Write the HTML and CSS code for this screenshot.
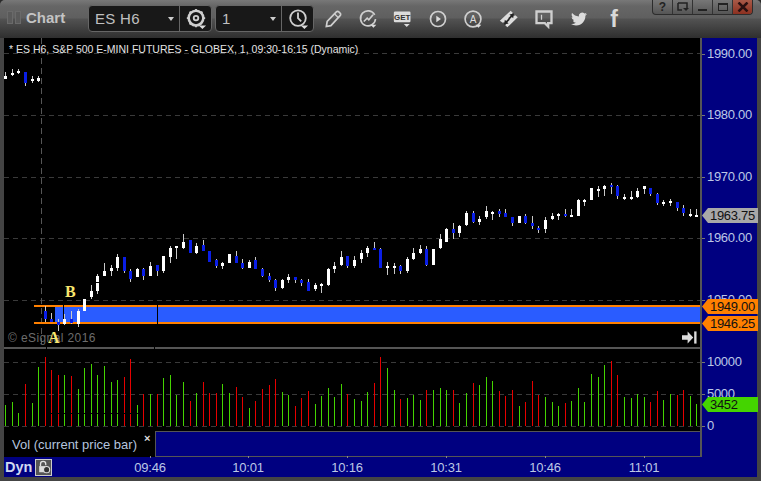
FILE: index.html
```html
<!DOCTYPE html>
<html lang="en">
<head>
<meta charset="utf-8">
<title>Chart</title>
<link rel="stylesheet" href="styles.css">
</head>
<body>
<div class="window">
  <header class="titlebar">
    <div class="handle"><span></span><span></span></div>
    <div class="app-name">Chart</div>
    <div class="combo combo-symbol">
      <span class="combo-value">ES H6</span><span class="caret"></span>
      <button class="combo-btn">
        <svg class="ico ico-lg" viewBox="0 0 24 24"><circle cx="12" cy="11" r="8" class="ln3"/><circle cx="12" cy="11" r="2.500" class="ln2"/><path d="M12 1v3M12 18v3M2 11h3M19 11h3M5 4l2 2M19 4l-2 2M5 18l2-2" class="ln2"/><path d="M15 19h8l-4 4z" class="fl"/></svg>
      </button>
    </div>
    <div class="combo combo-interval">
      <span class="combo-value">1</span><span class="caret"></span>
      <button class="combo-btn">
        <svg class="ico ico-lg" viewBox="0 0 24 24"><circle cx="12" cy="11" r="8.500" class="ln2"/><path d="M12 5v6l3.500 3.500" class="ln2"/><path d="M15 19h8l-4 4z" class="fl"/></svg>
      </button>
    </div>
    <div class="tools">
      <span class="tool"><svg class="ico" viewBox="0 0 24 24"><path d="M4 21l1-6L16 3.500a2 2 0 0 1 3 0l1.500 1.500a2 2 0 0 1 0 3L9.500 20z" class="ln2"/><path d="M14 6l4.500 4.500" class="ln1"/></svg></span>
      <span class="tool"><svg class="ico" viewBox="0 0 24 24"><path d="M20 7A9 9 0 1 0 21 12" class="ln2"/><path d="M7 15l4-4 2 2 5-6" class="ln2"/><path d="M15 19h7l-3.500 3.500z" class="fl"/></svg></span>
      <span class="tool"><svg class="ico" viewBox="0 0 24 24"><rect x="1" y="3" width="20" height="13" rx="1.500" class="fl"/><text x="11" y="13.500" class="get">GET</text><path d="M13 18h7l-3.500 3.500z" class="fl"/></svg></span>
      <span class="tool"><svg class="ico" viewBox="0 0 24 24"><circle cx="12" cy="12" r="9" class="ln2"/><path d="M10 8l5.500 4-5.500 4z" class="fl"/></svg></span>
      <span class="tool"><svg class="ico" viewBox="0 0 24 24"><circle cx="12" cy="12" r="9.500" class="ln2"/><text x="12" y="16.500" class="circle-a">A</text><path d="M15 19h7l-3.500 3.500z" class="fl"/></svg></span>
      <span class="tool"><svg class="ico" viewBox="0 0 24 24"><path d="M1 14L14 2l2.500 2.500a2 2 0 0 0 3 3L22.500 10 10 22l-2.500-2.500a2 2 0 0 0-3-3z" class="fl"/><path d="M11 11l3-3-1.500-1.500L18 5.500 17 11l-1.500-1.500-3 3zM13 13l-3 3 1.500 1.500L6 18.500 7 13l1.500 1.500 3-3z" class="dk"/></svg></span>
      <span class="tool"><svg class="ico" viewBox="0 0 24 24"><path d="M3 3h18v14h-4v4l-4-4H3z" class="ln3"/><path d="M9 7v6" class="ln1"/></svg></span>
      <span class="tool"><svg class="ico ico-sm" viewBox="0 0 24 24"><path class="fl" d="M23.950 4.570a10 10 0 0 1-2.820.780 4.960 4.960 0 0 0 2.160-2.720c-.950.550-2 .960-3.120 1.190a4.920 4.920 0 0 0-8.380 4.480C7.690 8.100 4.070 6.130 1.640 3.160a4.820 4.820 0 0 0-.660 2.480c0 1.710.870 3.210 2.190 4.100a4.900 4.900 0 0 1-2.230-.620v.060a4.920 4.920 0 0 0 3.950 4.830 5 5 0 0 1-2.210.080 4.940 4.940 0 0 0 4.600 3.420A9.870 9.870 0 0 1 0 19.540a13.940 13.940 0 0 0 7.550 2.210c9.050 0 14-7.500 14-13.980 0-.210 0-.420-.020-.630a9.940 9.940 0 0 0 2.460-2.550z"/></svg></span>
      <span class="tool tool-f">f</span>
    </div>
    <div class="winbtns">
      <span class="winbtn help">?</span>
      <span class="winbtn"><svg class="wico" viewBox="0 0 12 10"><path d="M1 1h9v5" class="wln"/><path d="M1 1v7h4" class="wln"/><path d="M6 6h6L9 9z" class="wfl"/></svg></span>
      <span class="winbtn"><span class="bar-min"></span></span>
      <span class="winbtn"><span class="box-max"></span></span>
      <span class="winbtn close"><svg class="wico" viewBox="0 0 12 10"><path d="M1.500 0.500l9 9M10.500 0.500l-9 9" class="xln"/></svg></span>
    </div>
  </header>

  <main class="panes">
    <section class="plots">
      <div class="price-pane">
        <svg id="price" class="plot" viewBox="4 38 696 308" width="696" height="308"></svg>
        <div class="study-title">* ES H6, S&amp;P 500 E-MINI FUTURES - GLOBEX, 1, 09:30-16:15 (Dynamic)</div>
        <div class="copyright">© eSignal 2016</div>
        <div class="mark mark-a">A</div>
        <div class="mark mark-b">B</div>
        <svg class="goto-end" viewBox="0 0 16 13"><path d="M0 4h6V0l6 6.500-6 6.500V9H0z" class="fl"/><rect x="13" y="0" width="2.500" height="13" class="fl"/></svg>
      </div>
      <div class="sep"><span class="sep-gap gap-a"></span><span class="sep-gap gap-b"></span></div>
      <svg id="vol" class="plot" viewBox="4 349 696 82" width="696" height="82"></svg>
      <div class="legend">
        <div class="legend-name">Vol (current price bar)<span class="legend-x">×</span></div>
        <div class="legend-fill"></div>
      </div>
    </section>
    <aside class="axis" id="axis"></aside>
  </main>

  <footer class="timeaxis" id="time">
    <span class="dyn">Dyn</span>
    <span class="lock"><svg class="lock-ico" viewBox="0 0 16 16"><path d="M4 7V4.500a3 3 0 0 1 6 0V6" class="lockln"/><rect x="2.500" y="7" width="7" height="7" class="fl"/><circle cx="11" cy="11" r="3.500" class="lockclk"/></svg></span>
  </footer>
</div>
<script src="script.js"></script>
</body>
</html>
```
FILE: styles.css
```css
* { box-sizing: border-box; }
html, body { margin: 0; padding: 0; background: #2a2a2a; }
body { font-family: "Liberation Sans", Arial, sans-serif; }
.window {
  width: 761px; height: 481px; padding: 0 4px 4px;
  background: #444; display: flex; flex-direction: column;
  border-radius: 5px 5px 0 0; overflow: hidden;
}
.titlebar {
  height: 38px; margin: 0 -4px; padding-left: 7px; flex: none;
  display: flex; align-items: flex-start; position: relative;
  background: linear-gradient(#787878 0, #666 6px, #5f5f5f 18px, #525252 19px, #2f2f2f 38px);
}
.handle { display: flex; gap: 2px; margin-top: 11px; }
.handle span { width: 6px; height: 13px; border: 1px solid #6a6a6a; background: #5a5a5a; }
.app-name { margin: 9px 0 0 5px; width: 62px; font-weight: bold; font-size: 15px; line-height: 18px; color: #c4c4c4; }
.combo {
  height: 27px; margin-top: 5px; background: #181818; border: 1px solid #666;
  border-radius: 4px; display: flex; align-items: center; position: relative;
}
.combo-symbol { width: 124px; }
.combo-interval { width: 99px; margin-left: 3px; }
.combo-value { font-size: 15px; color: #c0c0c0; padding-left: 6px; flex: 1; letter-spacing: .3px; }
.caret { width: 0; height: 0; border: 3.500px solid transparent; border-top: 4px solid #ccc; border-bottom: 0; margin-right: 5px; }
.combo-btn {
  width: 32px; height: 25px; padding: 0; border: 0; border-left: 1px solid #666;
  background: none; display: flex; align-items: center; justify-content: center;
}
.ico { width: 20px; height: 20px; display: block; }
.ico-lg { width: 22px; height: 22px; }
.ico-sm { width: 16px; height: 16px; }
.ln1, .ln2, .ln3 { fill: none; stroke: #cfcfcf; }
.ln1 { stroke-width: 1.500; }
.ln2 { stroke-width: 2; }
.ln3 { stroke-width: 2.800; }
.fl { fill: #dcdcdc; }
.dk { fill: #222; }
.get { font: bold 9.500px "Liberation Sans", sans-serif; fill: #333; text-anchor: middle; }
.circle-a { font: 12px "Liberation Sans", sans-serif; fill: #ddd; text-anchor: middle; }
.tools { display: flex; margin-left: 1px; }
.tool { width: 35.200px; height: 38px; display: flex; align-items: center; justify-content: center; }
.tool-f { font: bold 23px "Liberation Sans", sans-serif; color: #d8d8d8; }
.winbtns {
  position: absolute; right: 8px; top: 0; width: 101px; height: 15px;
  display: flex; border: 1px solid #2c2c2c; border-top: 0; border-radius: 0 0 4px 4px; overflow: hidden;
  background: linear-gradient(#777, #555);
}
.winbtn {
  flex: 1; border-left: 1px solid #333; display: flex; align-items: center; justify-content: center;
  font: bold 12px "Liberation Sans", sans-serif; color: #222;
}
.winbtn:first-child { border-left: 0; }
.close { background: linear-gradient(#a85a48, #8c3020); }
.wico { width: 12px; height: 10px; display: block; }
.wln { fill: none; stroke: #222; stroke-width: 1.500; }
.wfl { fill: #222; }
.xln { stroke: #2a1010; stroke-width: 2.500; fill: none; }
.bar-min { width: 9px; height: 2px; background: #222; margin-top: 6px; }
.box-max { width: 10px; height: 8px; border: 1px solid #222; border-top-width: 2px; }

.panes { display: flex; height: 419px; flex: none; }
.plots { width: 698px; flex: none; background: #000; border-right: 2px solid #555; display: flex; flex-direction: column; }
.price-pane { height: 308px; position: relative; flex: none; }
.plot { display: block; flex: none; background: #000; shape-rendering: crispEdges; }
.study-title { position: absolute; left: 5px; top: 5px; font-size: 10.500px; line-height: 12px; color: #e4e4e4; white-space: nowrap; }
.copyright { position: absolute; left: 4px; top: 293px; font-size: 12px; line-height: 14px; color: #6c6c6c; letter-spacing: .4px; white-space: nowrap; }
.mark { position: absolute; font: bold 16px "Liberation Serif", serif; color: #f8e66e; line-height: 16px; }
.mark-a { left: 44px; top: 292px; }
.mark-b { left: 61px; top: 246px; }
.goto-end { position: absolute; left: 678px; top: 293px; width: 15px; height: 13px; }
.sep { height: 3px; flex: none; border-top: 1px solid #000; background: #555; position: relative; }
.sep-gap { position: absolute; top: 0; width: 1px; height: 2px; background: #000; }
.gap-a { left: 42px; }
.gap-b { left: 150px; }
.legend { height: 26px; flex: none; display: flex; }
.legend-name { width: 151px; position: relative; font-size: 13px; line-height: 26px; padding: 1px 0 0 8px; color: #b4c4de; white-space: nowrap; }
.legend-x { position: absolute; left: 140px; top: -2px; font: bold 11px/12px "Liberation Sans", sans-serif; color: #ddd; padding-top: 3px; }
.legend-fill { flex: 1; background: #000080; border-top: 1px solid #555; border-left: 1px solid #555; border-bottom: 1px solid #555; }

.axis { flex: 1; background: #000080; position: relative; }
.axis-label { position: absolute; left: 5px; font-size: 13px; letter-spacing: -.3px; line-height: 14px; color: #bcc8e6; white-space: nowrap; }
.axis-tick { position: absolute; left: 0; width: 3px; height: 1px; background: #777; }
.tag {
  position: absolute; left: 0; width: 56px; height: 15px; padding-left: 8px;
  font-size: 13px; letter-spacing: -.3px; line-height: 15px; color: #111;
  clip-path: polygon(0 50%, 6px 0, 100% 0, 100% 100%, 6px 100%);
}
.tag-last { background: #a8a8a8; }
.tag-level { background: #ff8000; }
.tag-vol { background: #44d400; }

.timeaxis { height: 20px; flex: none; background: #000080; position: relative; display: flex; align-items: center; padding-left: 1px; }
.dyn { font-weight: bold; font-size: 14.500px; color: #d0d8f0; }
.lock { width: 17px; height: 17px; margin-left: 3px; border: 1px solid #ccc; background: #555; display: flex; align-items: center; justify-content: center; }
.lock-ico { width: 14px; height: 14px; display: block; }
.lockln { fill: none; stroke: #e0e0e0; stroke-width: 1.500; }
.lockclk { fill: #333; stroke: #e0e0e0; stroke-width: 1.200; }
.time-label { position: absolute; top: 3px; transform: translateX(-50%); font-size: 13px; letter-spacing: -.2px; line-height: 15px; color: #bcc8e6; }
.time-tick { position: absolute; top: -1px; width: 1px; height: 2px; background: #888; }
```
FILE: script.js
```js
var NS = 'http://www.w3.org/2000/svg';

function rect(svg, x, y, w, h, fill) {
  var r = document.createElementNS(NS, 'rect');
  r.setAttribute('x', x); r.setAttribute('y', y);
  r.setAttribute('width', w); r.setAttribute('height', h);
  r.setAttribute('fill', fill);
  svg.appendChild(r);
}

/* volume bars: [x read at 3x, top read at 3x, colour] per section */
var volSections = [
  [0, [[16,165,'g'],[37,156,'g'],[55,189,'g'],[76,102,'r'],[97,159,'g'],[115,51,'g'],[136,21,'r'],[154,60,'r'],[175,75,'r'],[193,75,'g'],[214,78,'r'],[235,117,'g'],[253,54,'g'],[274,42,'g'],[292,75,'g'],[313,48,'g'],[334,96,'g'],[352,90,'g'],[373,81,'r'],[391,27,'r'],[412,165,'g'],[430,132,'r'],[451,132,'g'],[472,132,'r'],[490,84,'g'],[511,75,'g'],[529,135,'g'],[550,96,'g'],[571,153,'r'],[589,129,'g'],[610,96,'r'],[628,129,'r'],[649,129,'r'],[667,102,'g'],[688,129,'g']]],
  [230, [[19,111,'r'],[37,141,'r'],[58,174,'g'],[76,153,'r'],[97,117,'r'],[118,105,'r'],[136,87,'r'],[157,126,'g'],[175,135,'g'],[196,168,'r'],[214,144,'r'],[235,123,'r'],[256,162,'g'],[274,138,'g'],[295,114,'g'],[313,141,'g'],[334,102,'g'],[352,132,'r'],[373,147,'g'],[394,153,'g'],[412,126,'g'],[433,99,'r'],[451,21,'r'],[472,54,'g'],[493,120,'g'],[511,147,'r'],[532,144,'g'],[550,135,'g']]],
  [415, [[16,150,'g'],[34,120,'r'],[55,120,'g'],[76,114,'g'],[94,120,'g'],[115,120,'r'],[133,159,'g'],[154,129,'g'],[175,99,'r'],[193,105,'g'],[214,81,'g'],[232,93,'g'],[253,123,'r'],[271,138,'r'],[292,120,'r'],[313,168,'g'],[331,156,'r'],[352,93,'r'],[370,135,'r'],[391,141,'g'],[412,156,'g'],[430,168,'g'],[451,159,'r'],[469,153,'g'],[490,114,'g'],[508,156,'g'],[529,72,'g'],[550,81,'g']]],
  [600, [[13,45,'g'],[34,33,'r'],[52,75,'r'],[73,141,'g'],[94,144,'g'],[112,132,'g'],[133,141,'g'],[151,156,'r'],[172,123,'r'],[190,150,'g'],[211,132,'g'],[232,135,'r'],[250,120,'r'],[271,138,'g'],[289,162,'g']]]
];

/* candles: [wick top, wick bottom, body top, body bottom, colour], y read at 3x */
var candleSections = [
  [0, [[216,238,228,236,'w'],[207,228,219,226,'w'],[207,222,212,220,'w'],[216,258,216,250,'b'],[228,248,237,244,'w'],[228,246,235,242,'w']]],
  [270, [[108,157,124,148,'b'],[129,157,148,156,'b'],[148,182,156,165,'b'],[132,166,148,162,'w'],[123,163,148,159,'b'],[117,172,124,163,'w'],[87,123,87,123,'w']]],
  [225, [[180,222,198,216,'w'],[148,207,153,198,'w'],[114,153,138,153,'w'],[120,153,129,138,'w'],[87,138,96,129,'w'],[96,144,96,138,'b'],[132,171,138,162,'b'],[129,156,132,156,'w'],[129,165,132,153,'b'],[111,153,123,153,'w'],[120,153,120,138,'b'],[93,144,93,138,'w'],[63,114,69,96,'w'],[63,102,63,69,'w'],[27,72,51,69,'w'],[45,84,45,84,'b'],[54,87,63,84,'w'],[45,78,60,78,'b'],[78,111,78,111,'b'],[102,129,105,123,'b'],[111,132,114,123,'w'],[87,114,87,114,'w'],[78,114,93,114,'b'],[102,132,114,129,'b'],[105,129,111,129,'w'],[96,132,105,132,'b'],[129,156,132,153,'b'],[144,171,153,165,'b'],[162,198,165,189,'b'],[162,192,165,189,'w'],[147,174,156,165,'w'],[156,174,156,165,'b'],[162,183,165,174,'b'],[162,198,171,198,'b'],[174,198,180,192,'w'],[174,204,177,183,'w'],[129,183,132,180,'w'],[111,144,123,132,'w'],[78,123,96,120,'w'],[93,129,93,123,'b']]],
  [175, [[243,279,255,273,'w'],[225,264,234,252,'w'],[213,246,219,234,'w'],[201,225,219,225,'b'],[219,279,222,279,'b'],[261,300,273,279,'w'],[264,297,273,279,'w'],[270,297,273,288,'b'],[246,294,252,288,'w'],[219,255,234,252,'w'],[210,237,222,234,'w'],[213,273,222,270,'b'],[222,270,222,270,'w'],[177,222,192,219,'w'],[159,201,162,201,'w'],[144,192,162,174,'b'],[150,186,153,174,'w'],[108,153,114,150,'w'],[108,144,114,141,'b'],[123,150,132,141,'w'],[93,132,108,126,'w'],[108,135,111,117,'w'],[102,126,108,117,'b'],[102,126,114,126,'b'],[126,153,126,144,'b'],[123,144,123,144,'w'],[117,147,123,144,'b'],[123,162,144,153,'b'],[153,174,159,165,'b'],[126,174,135,162,'w'],[114,135,123,132,'w'],[114,135,117,123,'w'],[102,126,117,123,'b'],[102,126,120,126,'w'],[72,123,75,123,'w'],[72,93,75,81,'w'],[39,75,39,75,'w'],[33,66,42,48,'w'],[30,63,33,42,'w'],[24,57,30,36,'b'],[30,72,33,63,'b'],[57,75,66,72,'w'],[48,75,66,72,'w'],[39,69,48,66,'w'],[33,57,33,42,'w'],[39,63,39,57,'b'],[54,90,57,84,'b'],[75,93,81,87,'w'],[72,93,78,84,'w'],[81,108,81,99,'b'],[90,123,99,114,'b'],[102,126,117,123,'w'],[102,126,120,126,'w']]]
];

var GREEN = '#44d400', RED = '#e60000', WHITE = '#ffffff', BLUE = '#0a1ee6', WICK = '#c8c8c8', GRID = '#3a3a3a';
var price = document.getElementById('price');
var vol = document.getElementById('vol');
var xs = [];

function hDash(svg, y, x0, x1) {
  for (var x = x0; x < x1; x += 9) rect(svg, x, y, 5, 1, GRID);
}

/* price grid */
[53, 115, 177, 238, 300].forEach(function (y) { hDash(price, y, 4, 700); });
for (var vy = 38; vy < 345; vy += 10) rect(price, 41, vy, 1, 6, '#555');

/* level band */
rect(price, 55, 307, 645, 15, '#2a5cff');
rect(price, 34, 305, 666, 2, '#ff8000');
rect(price, 34, 322, 666, 2, '#ff8000');
rect(price, 63, 305, 1, 20, '#000');
rect(price, 157, 305, 1, 20, '#000');

/* volume grid and bars */
[362, 394, 426].forEach(function (y) { hDash(vol, y, 4, 700); });
volSections.forEach(function (sec) {
  sec[1].forEach(function (b) {
    var x = Math.floor(sec[0] + b[0] / 3);
    var top = Math.round(350 + b[1] / 3);
    xs.push(x);
    rect(vol, x, top, 1, 426 - top, b[2] === 'g' ? GREEN : RED);
  });
});
rect(vol, 51, 413, 92, 1, '#000');

/* candles */
var n = 0;
candleSections.forEach(function (sec) {
  sec[1].forEach(function (c) {
    var x = xs[n++];
    var y = function (v) { return Math.round(sec[0] + v / 3); };
    rect(price, x, y(c[0]), 1, y(c[1]) - y(c[0]), WICK);
    rect(price, x - 1, y(c[2]), 3, y(c[3]) - y(c[2]), c[4] === 'w' ? WHITE : BLUE);
  });
});
rect(price, xs[14] - 1, 282, 3, 1, '#000');

/* axis labels */
var axis = document.getElementById('axis');
function el(parent, cls, text, top) {
  var d = document.createElement('div');
  d.className = cls;
  if (text) d.textContent = text;
  d.style.top = top + 'px';
  parent.appendChild(d);
  return d;
}
[['1990.00', 54], ['1980.00', 115], ['1970.00', 177], ['1960.00', 238], ['1950.00', 300], ['10000', 362], ['5000', 394], ['0', 426]].forEach(function (l) {
  el(axis, 'axis-tick', '', l[1] - 38);
  el(axis, 'axis-label', l[0], l[1] - 38 - 7);
});
el(axis, 'tag tag-last', '1963.75', 208 - 38);
el(axis, 'tag tag-level', '1949.00', 299 - 38);
el(axis, 'tag tag-level', '1946.25', 316 - 38);
el(axis, 'tag tag-vol', '3452', 397 - 38);

/* time axis */
var time = document.getElementById('time');
[['09:46', 150], ['10:01', 248], ['10:16', 347], ['10:31', 446], ['10:46', 545], ['11:01', 644]].forEach(function (t) {
  el(time, 'time-label', t[0], 3).style.left = (t[1] - 4) + 'px';
  el(time, 'time-tick', '', -1).style.left = (t[1] - 4) + 'px';
});
```
